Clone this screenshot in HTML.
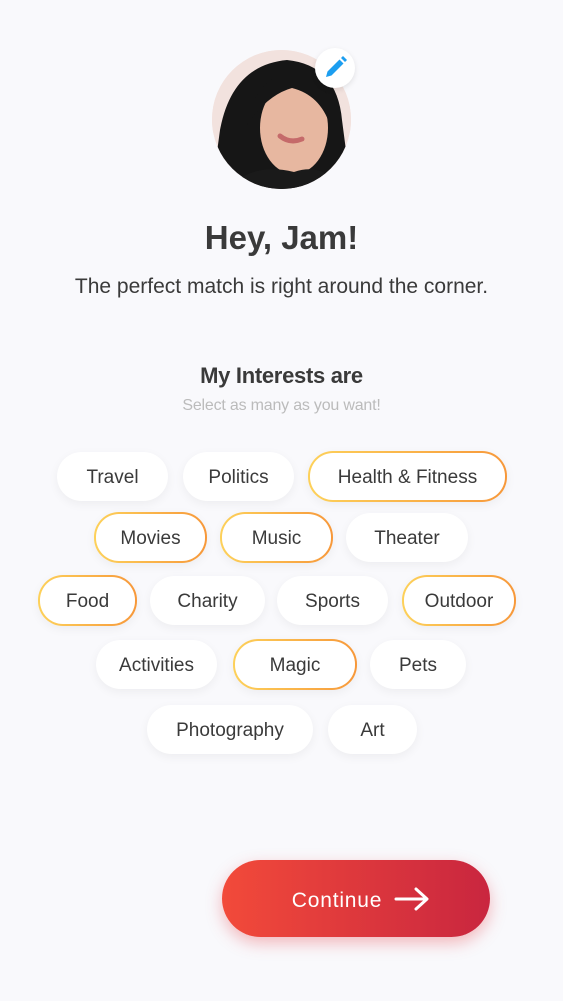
<!DOCTYPE html>
<html><head><meta charset="utf-8"><style>
body{margin:0;width:563px;height:1001px;background:#f9f9fc;font-family:"Liberation Sans",sans-serif;position:relative;overflow:hidden;color:#3a3a3a}
.av{position:absolute;left:212px;top:50px;width:139px;height:139px;border-radius:50%;overflow:hidden;background:#f3e3df}
.ed{position:absolute;left:315px;top:48px;width:40px;height:40px;border-radius:50%;background:#fff;box-shadow:0 2px 6px rgba(0,0,0,.1)}
h1{position:absolute;top:219px;width:100%;text-align:center;margin:0;font-size:33px;font-weight:bold;color:#3a3a3a}
.sub{position:absolute;top:275px;width:100%;text-align:center;font-size:21px;color:#3a3a3a}
.h2{position:absolute;top:363px;width:100%;text-align:center;font-size:22px;font-weight:bold;letter-spacing:-0.3px}
.s2{position:absolute;top:397px;width:100%;text-align:center;font-size:16px;color:#bbb;letter-spacing:-0.2px}
.p{position:absolute;height:49px;box-sizing:border-box;border-radius:25px;background:#fff;box-shadow:0 3px 10px rgba(0,0,0,.05);display:flex;align-items:center;justify-content:center;font-size:19px;color:#3a3a3a;padding-top:2px}
.on{border:2.5px solid transparent;background:linear-gradient(#fff,#fff) padding-box,linear-gradient(90deg,#fdd15a,#f7983a) border-box}
.btn{position:absolute;left:222px;top:860px;width:268px;height:77px;border-radius:39px;background:linear-gradient(90deg,#f24a3a,#c9263f);box-shadow:0 6px 16px rgba(230,60,70,.35);color:#fff;font-size:21px;display:flex;align-items:center;justify-content:center;letter-spacing:.8px;padding-top:4px;box-sizing:border-box;padding-left:10px}
</style></head><body>
<div class="av"><svg width="139" height="139" viewBox="0 0 139 139">
<rect width="139" height="139" fill="#f2e2de"/>
<path d="M0 139 L8 80 Q20 15 75 10 Q125 15 130 70 L139 139Z" fill="#161616"/>
<ellipse cx="82" cy="78" rx="34" ry="46" fill="#e7b7a0"/>
<path d="M35 75 Q45 15 100 22 Q120 40 118 75 Q108 45 80 38 Q55 45 35 75Z" fill="#161616"/>
<path d="M68 86 Q78 94 90 89" stroke="#c56a6a" stroke-width="5" fill="none" stroke-linecap="round"/>
<path d="M15 139 Q40 112 82 122 Q112 112 130 139Z" fill="#1a1a1a"/>
</svg></div>
<div class="ed"><svg width="40" height="40" viewBox="0 0 40 40"><path d="M11 29 L12.5 23.5 L24.5 11.5 L28.5 15.5 L16.5 27.5Z M26 10 L28 8 L32 12 L30 14Z" fill="#1c9ef0"/></svg></div>
<h1>Hey, Jam!</h1>
<div class="sub">The perfect match is right around the corner.</div>
<div class="h2">My Interests are</div>
<div class="s2">Select as many as you want!</div>
<div class="p" style="left:57px;top:452px;width:111px">Travel</div>
<div class="p" style="left:183px;top:452px;width:111px">Politics</div>
<div class="p on" style="left:308px;top:451px;width:199px;height:51px">Health &amp; Fitness</div>
<div class="p on" style="left:94px;top:512px;width:113px;height:51px">Movies</div>
<div class="p on" style="left:220px;top:512px;width:113px;height:51px">Music</div>
<div class="p" style="left:346px;top:513px;width:122px">Theater</div>
<div class="p on" style="left:38px;top:575px;width:99px;height:51px">Food</div>
<div class="p" style="left:150px;top:576px;width:115px">Charity</div>
<div class="p" style="left:277px;top:576px;width:111px">Sports</div>
<div class="p on" style="left:402px;top:575px;width:114px;height:51px">Outdoor</div>
<div class="p" style="left:96px;top:640px;width:121px">Activities</div>
<div class="p on" style="left:233px;top:639px;width:124px;height:51px">Magic</div>
<div class="p" style="left:370px;top:640px;width:96px">Pets</div>
<div class="p" style="left:147px;top:705px;width:166px">Photography</div>
<div class="p" style="left:328px;top:705px;width:89px">Art</div>
<div class="btn">Continue<svg style="margin-left:12px;margin-top:-4px" width="36" height="24" viewBox="0 0 36 24"><path d="M2 12 H32 M22 2 L33 12 L22 22" stroke="#fff" stroke-width="3" fill="none" stroke-linecap="round" stroke-linejoin="round"/></svg></div>
</body></html>
